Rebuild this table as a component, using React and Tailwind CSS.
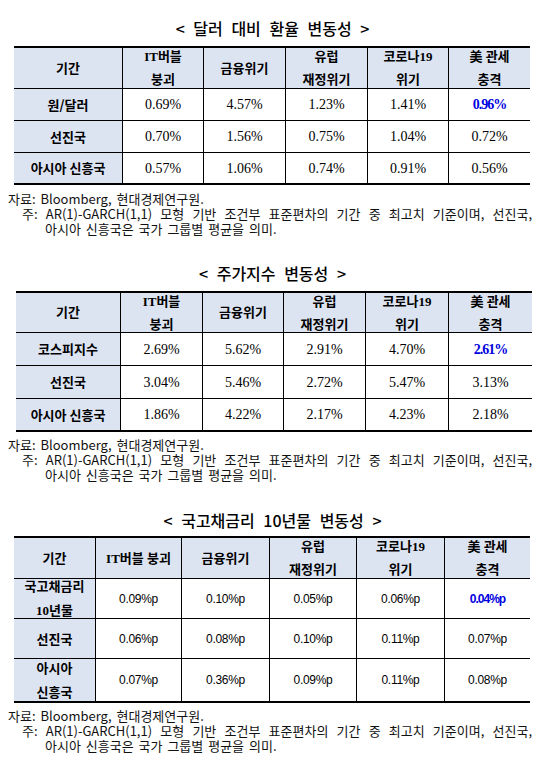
const KR = { fontFamily: '"Noto Sans CJK KR", "Noto Sans", sans-serif' };
const HEAD = { fontFamily: '"Liberation Serif", "Noto Sans CJK KR", serif' };
const SERIF = { fontFamily: '"Liberation Serif", "Noto Sans CJK KR", serif' };
const SANS = { fontFamily: '"Liberation Sans", "Noto Sans CJK KR", sans-serif' };

function Title({ children, className }) {
  return (
    <div className={"text-center text-[16px] leading-[20px] font-medium text-black [word-spacing:5px] " + className} style={KR}>
      {children}
    </div>
  );
}

function Notes({ className }) {
  return (
    <div className={"text-[13px] leading-[14px] text-[#111] " + className} style={KR}>
      <div className="pl-[8px] pb-[1px] [word-spacing:2px]">자료: Bloomberg, 현대경제연구원.</div>
      <div className="pl-[45px] pr-[13px]">
        <div className="-indent-[23px] text-justify [text-align-last:justify] pb-[1px]">
          주: AR(1)-GARCH(1,1) 모형 기반 조건부 표준편차의 기간 중 최고치 기준이며, 선진국,
        </div>
        <div className="[word-spacing:2px]">아시아 신흥국은 국가 그룹별 평균을 의미.</div>
      </div>
    </div>
  );
}

function Table({ cols, rows, header, data, ml, numFont, numClass, blueClass, firstColHeadStyle }) {
  const cells = [];
  header.forEach((h, i) => {
    cells.push(
      <div
        key={"h" + i}
        className={
          "flex flex-col items-center justify-center text-center bg-[#dce4f2] border-b border-black text-[13px] leading-[23px] font-bold text-black " +
          (i > 0 ? "border-l" : "")
        }
        style={HEAD}
      >
        {h.map((line, j) => (
          <div key={j}>{line}</div>
        ))}
      </div>
    );
  });
  data.forEach((row, r) => {
    const last = r === data.length - 1;
    row.forEach((v, c) => {
      const isFirst = c === 0;
      const isBlue = c === 5 && r === 0;
      cells.push(
        <div
          key={r + "-" + c}
          className={
            "flex flex-col items-center justify-center text-center border-black " +
            (last ? "" : "border-b ") +
            (isFirst
              ? "bg-[#dce4f2] text-[13px] leading-[24px] font-bold text-black"
              : "border-l " + (isBlue ? blueClass : numClass))
          }
          style={isFirst ? (firstColHeadStyle && r === 0 ? HEAD : KR) : numFont}
        >
          {Array.isArray(v) ? v.map((line, j) => <div key={j}>{line}</div>) : v}
        </div>
      );
    });
  });
  return (
    <div
      className={"grid border-t-2 border-b-2 border-black w-[516px] " + cols + " " + rows + " " + ml}
    >
      {cells}
    </div>
  );
}

const header5 = [
  ["IT버블", "붕괴"],
  ["금융위기"],
  ["유럽", "재정위기"],
  ["코로나19", "위기"],
  ["美 관세", "충격"],
];

export default function App() {
  return (
    <div className="w-[545px] h-[761px] bg-white overflow-hidden pt-[18px]">
      <Title>&lt; 달러 대비 환율 변동성 &gt;</Title>
      <div className="mt-[8px]">
        <Table
          cols="grid-cols-[108px_81px_82px_82px_81px_82px]"
          rows="grid-rows-[41px_32px_32px_30px]"
          ml="ml-[14px]"
          header={[["기간"], ...header5]}
          numFont={SERIF}
          numClass="text-[14px] text-black"
          blueClass="text-[14px] font-bold text-[#0000e0] tracking-[-1px]"
          data={[
            ["원/달러", "0.69%", "4.57%", "1.23%", "1.41%", "0.96%"],
            ["선진국", "0.70%", "1.56%", "0.75%", "1.04%", "0.72%"],
            ["아시아 신흥국", "0.57%", "1.06%", "0.74%", "0.91%", "0.56%"],
          ]}
        />
      </div>
      <Notes className="mt-[7px]" />

      <Title className="mt-[27px]">&lt; 주가지수 변동성 &gt;</Title>
      <div className="mt-[8px]">
        <Table
          cols="grid-cols-[104px_82px_81px_82px_83px_84px]"
          rows="grid-rows-[40px_33px_33px_31px]"
          ml="ml-[16px]"
          header={[["기간"], ...header5]}
          numFont={SERIF}
          numClass="text-[14px] text-black"
          blueClass="text-[14px] font-bold text-[#0000e0] tracking-[-1px]"
          data={[
            ["코스피지수", "2.69%", "5.62%", "2.91%", "4.70%", "2.61%"],
            ["선진국", "3.04%", "5.46%", "2.72%", "5.47%", "3.13%"],
            ["아시아 신흥국", "1.86%", "4.22%", "2.17%", "4.23%", "2.18%"],
          ]}
        />
      </div>
      <Notes className="mt-[6px]" />

      <Title className="mt-[28px]">&lt; 국고채금리 10년물 변동성 &gt;</Title>
      <div className="mt-[6px]">
        <Table
          cols="grid-cols-[81px_86px_88px_87px_88px_86px]"
          rows="grid-rows-[41px_40px_40px_42px]"
          ml="ml-[14px]"
          header={[["기간"], ["IT버블 붕괴"], ["금융위기"], ["유럽", "재정위기"], ["코로나19", "위기"], ["美 관세", "충격"]]}
          numFont={SANS}
          numClass="text-[12px] text-black tracking-[-0.3px]"
          blueClass="text-[12px] font-bold text-[#0000e0] tracking-[-1px]"
          firstColHeadStyle
          data={[
            [["국고채금리", "10년물"], "0.09%p", "0.10%p", "0.05%p", "0.06%p", "0.04%p"],
            ["선진국", "0.06%p", "0.08%p", "0.10%p", "0.11%p", "0.07%p"],
            [["아시아", "신흥국"], "0.07%p", "0.36%p", "0.09%p", "0.11%p", "0.08%p"],
          ]}
        />
      </div>
      <Notes className="mt-[6px]" />
    </div>
  );
}
